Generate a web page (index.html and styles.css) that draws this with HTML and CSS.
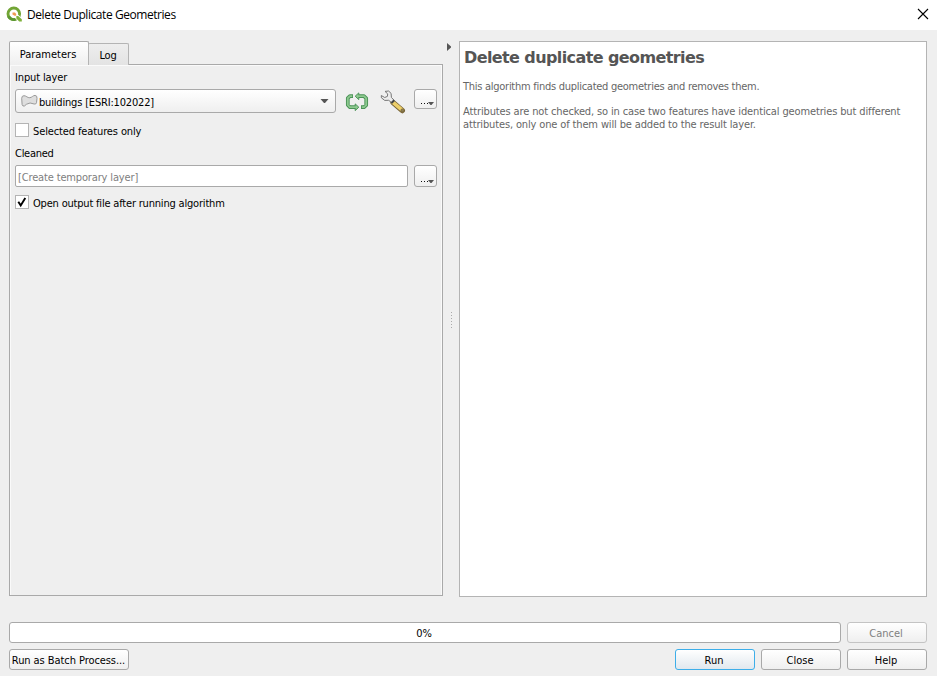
FILE: index.html
```html
<!DOCTYPE html>
<html lang="en">
<head>
<meta charset="utf-8">
<title>Delete Duplicate Geometries</title>
<link rel="stylesheet" href="styles.css">
</head>
<body>
<header class="titlebar">
  <svg class="logo" width="16" height="16" viewBox="0 0 16 16">
    <circle cx="7.8" cy="7.8" r="5.8" fill="none" stroke="#72a535" stroke-width="2.9"/>
    <path d="M2.6 10.3A5.8 5.8 0 0 0 9.4 13.3" fill="none" stroke="#5b9632" stroke-width="2.9"/>
    <path d="M9 8.6H12L16 12.6V16H12.8L9 12Z" fill="#fff"/>
    <path d="M10.3 10H12.2L15.8 13.3V15.6H13.2L10.3 12.6Z" fill="#7fb13c"/>
    <path d="M6.5 6.5H9L10.2 8V9.8H8.6L6.5 8.6Z" fill="#ee9a52"/>
  </svg>
  <h1 class="window-title"><span class="t-title">Delete Duplicate Geometries</span></h1>
  <svg class="close" width="12" height="12" viewBox="0 0 12 12"><path d="M1 1L11 11M11 1L1 11" stroke="#000" stroke-width="1.1"/></svg>
</header>
<main class="content">
  <section class="left">
    <nav class="tabs">
      <div class="tab active"><span class="t-param">Parameters</span></div>
      <div class="tab"><span class="t-log">Log</span></div>
    </nav>
    <div class="panel">
      <div class="label"><span class="t-input">Input layer</span></div>
      <div class="row layer-row">
        <div class="combo">
          <svg class="polygon" width="17" height="14" viewBox="0 0 17 14"><path d="M.7 4.3Q.8 1.6 3 1.7C5.6 1.8 6.2 3.9 8.8 3.7C11 3.5 12 1.4 14 1.4Q16.3 1.5 16 4.4L15.5 8.7Q15 10.6 13.2 10Q8.8 7.9 5.6 10.2L3.4 12Q1.6 12.6 1.1 10.5Z" fill="#dedede" stroke="#999" stroke-width="1"/></svg>
          <span class="t-build">buildings [ESRI:102022]</span>
          <svg class="arrow" width="9" height="5" viewBox="0 0 9 5"><path d="M.5 0H8.5L5 4H4Z" fill="#555"/></svg>
        </div>
        <svg class="iterate" width="24" height="20" viewBox="0 0 24 20">
          <g fill="none" stroke-linejoin="round">
            <path d="M8 4.2H4.9L2.8 6.2V13L4.9 15.2H10.5M16 15.2H19.1L21.2 13.2V6.4L19.1 4.2H13.5" stroke="#4b9357" stroke-width="3.7"/>
            <path d="M10.2 11.9L13.8 15.2L10.2 18.6ZM13.8 .9L10.2 4.2L13.8 7.6Z" fill="#8dc98f" stroke="#4b9357" stroke-width="1"/>
            <path d="M7.2 4.2H4.9L2.8 6.2V13L4.9 15.2H11.5M16.8 15.2H19.1L21.2 13.2V6.4L19.1 4.2H12.5" stroke="#8dc98f" stroke-width="1.8"/>
          </g>
        </svg>
        <svg class="wrench" width="26" height="24" viewBox="0 0 26 24">
          <path d="M13 12.5L22.3 20.6" stroke="#766235" stroke-width="5.3" stroke-linecap="round"/>
          <path d="M13 12.3L22.2 20.2" stroke="#edcf69" stroke-width="3.7" stroke-linecap="round"/>
          <circle cx="22.4" cy="20.4" r="1.5" fill="#8f8055" stroke="#655634" stroke-width=".7"/>
          <path d="M5 1.4L8.6 1L11.1 3.4L11.4 7.4L14 10.2L11.8 12.8L8.7 10.3L4.7 10.4L1.4 7.8L1.3 5.5L4.7 7.5L7.4 6.4L7.7 3.9Z" fill="#ececec" stroke="#777" stroke-width="1"/>
          <path d="M14.2 10.2L11.5 13" stroke="#444" stroke-width="2"/>
        </svg>
        <button class="more">
          <span class="dots"></span><svg width="6" height="3" viewBox="0 0 6 3"><path d="M0 0H6L3.5 3H2.5Z" fill="#555"/></svg>
        </button>
      </div>
      <div class="check"><span class="box"></span><span class="t-sel">Selected features only</span></div>
      <div class="label cleaned"><span class="t-clean">Cleaned</span></div>
      <div class="row output-row">
        <div class="field"><span class="t-temp">[Create temporary layer]</span></div>
        <button class="more tall">
          <span class="dots"></span><svg width="6" height="3" viewBox="0 0 6 3"><path d="M0 0H6L3.5 3H2.5Z" fill="#555"/></svg>
        </button>
      </div>
      <div class="check open"><span class="box"><svg width="12" height="12" viewBox="0 0 12 12"><path d="M2.3 5.8L4.7 9.4L9.3 2" fill="none" stroke="#000" stroke-width="1.9"/></svg></span><span class="t-open">Open output file after running algorithm</span></div>
    </div>
  </section>
  <div class="splitter">
    <svg class="collapse" width="4" height="8" viewBox="0 0 4 8"><path d="M0 0L4 3.4V4.6L0 8Z" fill="#555"/></svg>
    <div class="grip"></div>
  </div>
  <article class="help">
    <h2><span class="t-head">Delete duplicate geometries</span></h2>
    <p><span class="t-p1">This algorithm finds duplicated geometries and removes them.</span></p>
    <p><span class="t-p2">Attributes are not checked, so in case two features have identical geometries but different</span><br><span class="t-p3">attributes, only one of them will be added to the result layer.</span></p>
  </article>
</main>
<footer class="footer">
  <div class="progress"><span class="t-zero">0%</span></div>
  <button class="btn disabled"><span class="t-cancel">Cancel</span></button>
  <div class="actions">
    <button class="btn batch"><span class="t-batch">Run as Batch Process...</span></button>
    <button class="btn primary"><span class="t-run">Run</span></button>
    <button class="btn"><span class="t-close">Close</span></button>
    <button class="btn"><span class="t-help">Help</span></button>
  </div>
</footer>
</body>
</html>
```
FILE: styles.css
```css
* { box-sizing: border-box; }
body {
  margin: 0;
  width: 937px;
  height: 676px;
  overflow: hidden;
  display: flex;
  flex-direction: column;
  background: #efefef;
  color: #000;
  font: 11px/13px "DejaVu Sans Condensed", "DejaVu Sans", sans-serif;
  font-stretch: condensed;
}
span { white-space: nowrap; }
svg { display: block; flex: none; }
button { font: inherit; color: inherit; padding: 0; margin: 0; }

/* Tracking per caption */
.t-title { letter-spacing: -.44px; }
.t-input { letter-spacing: -.13px; }
.t-log { letter-spacing: -.2px; }
.t-build { letter-spacing: -.18px; }
.t-sel { letter-spacing: -.12px; }
.t-clean { letter-spacing: -.27px; }
.t-temp { letter-spacing: -.15px; }
.t-open { letter-spacing: -.19px; }
.t-head { letter-spacing: -.6px; }
.t-p1 { letter-spacing: -.27px; }
.t-p2 { letter-spacing: -.13px; }
.t-p3 { letter-spacing: -.14px; }
.t-batch { letter-spacing: -.07px; }

.titlebar { height: 30px; flex: none; display: flex; align-items: center; background: #fff; padding: 0 8px 0 6px; }
.logo { margin-top: -2px; }
.window-title { margin: 0 auto 0 5px; font: 12px/16px "Open Sans", sans-serif; font-stretch: normal; }
.close { margin-top: -2px; }

.content { height: 567px; flex: none; display: flex; padding: 11px 10px 0 9px; }
.left { width: 434px; display: flex; flex-direction: column; }
.tabs { display: flex; align-items: flex-end; height: 24px; position: relative; z-index: 1; }
.tab { width: 41px; height: 22px; margin-left: -1px; border: 1px solid #b4b4b4; border-bottom: 0; border-radius: 2px 2px 0 0; background: linear-gradient(#eee, #e3e3e3); text-align: center; padding: 5px 1px 0 0; }
.tab.active { width: 80px; height: 24px; margin: 0; border-color: #a9a9a9; background: linear-gradient(#fff, #efefef); padding: 6px 2px 0 0; }
.panel { height: 532px; margin-top: -1px; border: 1px solid #a9a9a9; box-shadow: inset 1px 1px #fafafa, inset -1px 0 #fafafa; padding: 6px 5px 0; }
.label { height: 13px; }
.row { display: flex; }
.layer-row { height: 26px; margin-top: 5px; }
.combo { width: 321px; height: 24px; display: flex; align-items: center; border: 1px solid #a9a9a9; border-radius: 3px; background: linear-gradient(#fff, #efefef); padding: 1px 6px 0 5px; }
.t-build { padding-top: 2px; }
.polygon { margin: -2px 1px 0 0; }
.arrow { margin-left: auto; }
.iterate { margin: 3px 0 0 9px; }
.wrench { margin: 1px 0 0 11px; }
.more { width: 23px; height: 20px; margin: 0 0 0 auto; display: flex; justify-content: flex-end; align-items: flex-end; border: 1px solid #a9a9a9; border-radius: 3px; background: linear-gradient(#fff, #efefef); padding: 0 2px 3px 0; }
.more.tall { height: 22px; }
.dots { width: 7px; height: 1px; margin: 0 0 1px; background: repeating-linear-gradient(90deg, #111 0 1px, transparent 1px 3px); }
.check { height: 14px; margin-top: 8px; display: flex; gap: 4px; line-height: 17px; }
.box { width: 14px; height: 14px; border: 1px solid #b4b4b4; background: #fff; }
.cleaned { margin-top: 10px; }
.output-row { margin-top: 5px; }
.field { width: 393px; height: 22px; border: 1px solid #a9a9a9; border-radius: 2px; background: #fff; color: #808080; padding: 5px 2px 0; }
.open { margin-top: 8px; }
.splitter { width: 16px; position: relative; }
.collapse { margin: 2px 0 0 4px; }
.grip { width: 1px; height: 16px; margin: 261px 0 0 8px; background: repeating-linear-gradient(#aaa 0 1px, transparent 1px 3px); }
.help { flex: 1; height: 556px; border: 1px solid #b4b4b4; background: #fff; color: #666; padding: 6px 3px; }
.help h2 { margin: 0 0 12px 1px; font: bold 16px/20px "DejaVu Sans", sans-serif; font-stretch: normal; color: #555; }
.help p { margin: 0 0 12px; }

.footer { display: grid; grid-template-columns: 832px 80px; gap: 6px; padding: 25px 0 0 9px; }
.progress { height: 21px; border: 1px solid #a9a9a9; border-radius: 3px; background: #fff; text-align: center; padding-top: 4px; padding-right: 2px; }
.btn { width: 80px; height: 21px; border: 1px solid #a9a9a9; border-radius: 3px; background: linear-gradient(#fff, #efefef); text-align: center; padding: 2px 2px 0 0; }
.disabled { color: #808080; border-color: #c4c4c4; }
.actions { grid-column: 1 / 3; display: flex; gap: 6px; }
.batch { width: 120px; margin-right: auto; padding-right: 1px; }
.primary { border-color: #3daee9; background: linear-gradient(#fff, #e1e8ee); }
```
